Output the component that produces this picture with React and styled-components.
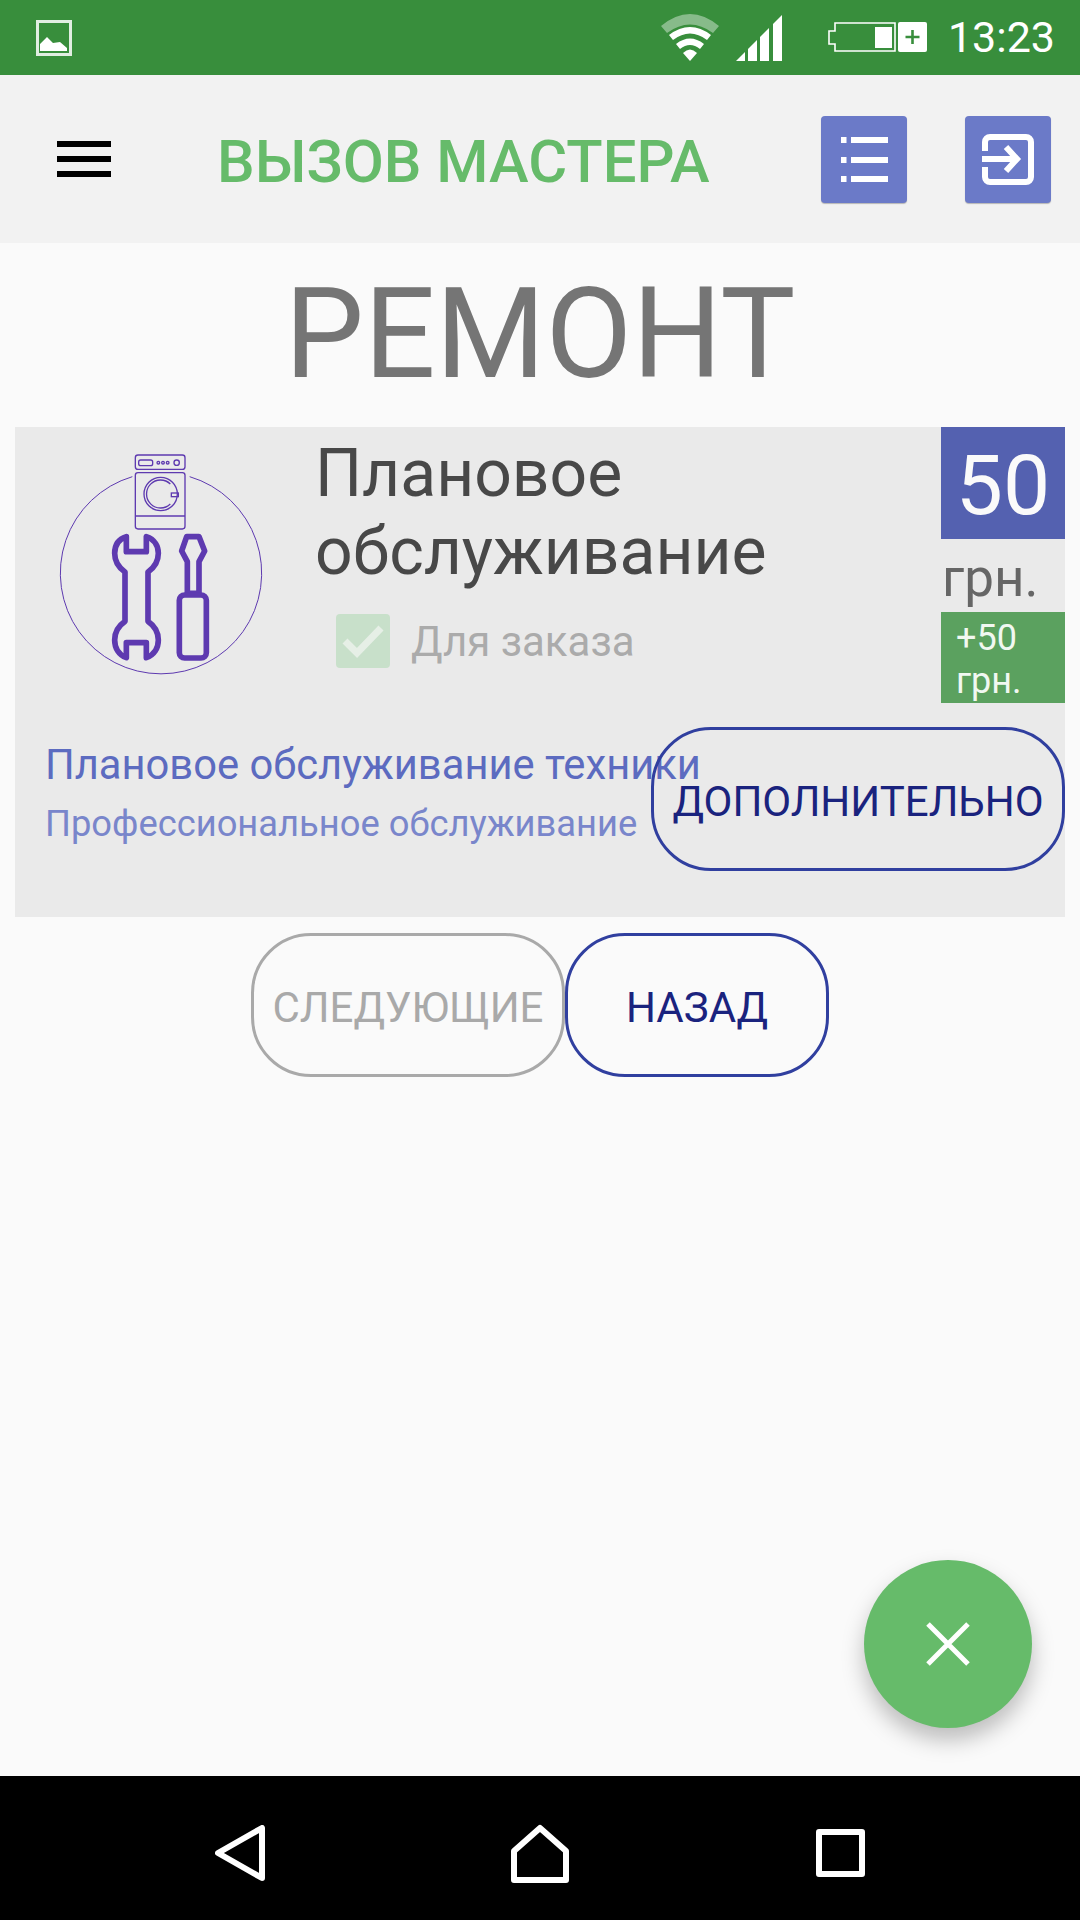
import React from 'react';
import styled, { createGlobalStyle } from 'styled-components';

const GlobalStyle = createGlobalStyle`
  html, body {
    margin: 0;
    padding: 0;
    background: #fafafa;
    font-family: Roboto, "Liberation Sans", sans-serif;
  }
`;

const Screen = styled.div`
  position: relative;
  display: flex;
  flex-direction: column;
  width: 1080px;
  height: 1920px;
  overflow: hidden;
  background: #fafafa;
`;

const StatusBar = styled.div`
  display: flex;
  align-items: center;
  height: 75px;
  padding: 0 25px 0 36px;
  background: #388e3c;
  color: #fff;
`;

const StatusIcons = styled.div`
  display: flex;
  align-items: center;
  margin-left: auto;
`;

const Clock = styled.span`
  margin-left: 21px;
  font-size: 43px;
  line-height: 75px;
`;

const Toolbar = styled.div`
  display: flex;
  align-items: center;
  height: 168px;
  padding: 0 29px 0 57px;
  background: #f2f2f2;
`;

const Burger = styled.div`
  display: flex;
  flex: none;
  flex-direction: column;
  gap: 9px;
  width: 54px;
  & > i {
    display: block;
    height: 6px;
    background: #000;
  }
`;

const AppTitle = styled.div`
  margin-left: 106px;
  padding-top: 5px;
  font-size: 59.7px;
  font-weight: 500;
  color: #66bb6a;
  white-space: nowrap;
`;

const ToolButton = styled.div`
  display: flex;
  flex: none;
  align-items: center;
  justify-content: center;
  width: 86px;
  height: 87px;
  margin-left: ${(props) => props.$gap};
  border-radius: 4px;
  background: #6b7ac8;
  box-shadow: 0 1px 1px rgba(0, 0, 0, 0.25);
`;

const PageTitle = styled.div`
  height: 184px;
  font-size: 126px;
  line-height: 182px;
  color: #757575;
  text-align: center;
`;

const Card = styled.div`
  display: flex;
  flex-direction: column;
  height: 490px;
  margin: 0 15px;
  background: #eaeaea;
`;

const TopRow = styled.div`
  display: flex;
  height: 285px;
`;

const Picture = styled.div`
  flex: none;
  width: 300px;
  padding: 23px 0 0 39px;
  box-sizing: border-box;
`;

const Info = styled.div`
  flex: 1;
  padding-top: 8px;
`;

const Name = styled.div`
  font-size: 66px;
  line-height: 78px;
  color: #484848;
`;

const OrderRow = styled.div`
  display: flex;
  align-items: center;
  gap: 21px;
  margin: 23px 0 0 21px;
`;

const CheckBox = styled.div`
  display: flex;
  align-items: center;
  justify-content: center;
  width: 54px;
  height: 54px;
  border-radius: 4px;
  background: #c8e0ca;
`;

const OrderLabel = styled.span`
  font-size: 42px;
  color: #ababab;
`;

const PriceColumn = styled.div`
  flex: none;
  width: 124px;
`;

const Price = styled.div`
  height: 112px;
  font-size: 84px;
  line-height: 118px;
  text-align: center;
  color: #fafafa;
  background: #5461b0;
`;

const Currency = styled.div`
  height: 73px;
  padding-left: 1px;
  font-size: 53px;
  line-height: 79px;
  color: #666;
`;

const Extra = styled.div`
  box-sizing: border-box;
  height: 91px;
  padding: 5px 0 0 15px;
  font-size: 36px;
  line-height: 43px;
  color: #f1f8f1;
  background: #5ba15f;
`;

const BottomRow = styled.div`
  display: flex;
  justify-content: space-between;
  margin-top: 15px;
  padding-left: 30px;
`;

const Details = styled.div`
  flex: 1;
  min-width: 0;
  white-space: nowrap;
`;

const DetailTitle = styled.div`
  margin-top: 14px;
  font-size: 41.7px;
  line-height: 48px;
  color: #5c6bc0;
`;

const DetailText = styled.div`
  margin-top: 11px;
  font-size: 36.35px;
  line-height: 48px;
  color: #7986cb;
`;

const OutlineButton = styled.div`
  display: flex;
  flex: none;
  align-items: center;
  justify-content: center;
  box-sizing: border-box;
  width: ${(props) => props.$width}px;
  height: 144px;
  padding-top: 4px;
  border: 3px solid ${(props) => (props.$disabled ? '#a9a9a9' : '#303f9f')};
  border-radius: 60px;
  font-size: 42px;
  color: ${(props) => (props.$disabled ? '#a9a9a9' : '#1a237e')};
  white-space: nowrap;
`;

const Pager = styled.div`
  display: flex;
  justify-content: center;
  margin-top: 16px;
`;

const Fab = styled.div`
  position: absolute;
  top: 1560px;
  left: 864px;
  display: flex;
  align-items: center;
  justify-content: center;
  width: 168px;
  height: 168px;
  border-radius: 50%;
  background: #66bb6a;
  box-shadow: 0 12px 22px rgba(0, 0, 0, 0.25);
`;

const NavBar = styled.div`
  display: grid;
  grid-template-columns: repeat(3, 300px);
  justify-content: center;
  justify-items: center;
  align-items: center;
  box-sizing: border-box;
  height: 144px;
  margin-top: auto;
  padding-top: 10px;
  background: #000;
`;

const PictureIcon = () => (
  <svg width="36" height="36" viewBox="0 0 36 36">
    <rect x="1.5" y="1.5" width="33" height="33" fill="none" stroke="#fff" strokeWidth="3" opacity="0.85" />
    <path d="M4 31V24L11 17 17 23 24 22 31 28V31Z" fill="#fff" />
  </svg>
);

const WifiIcon = () => (
  <svg width="58" height="47" viewBox="0 0 58 47" fill="#fff">
    <path d="M0 12Q29-12 58 12L52 19Q29 2 6 19Z" opacity="0.4" />
    <path d="M8 21Q29 5 50 21L46 26Q29 13 12 26Z" />
    <path d="M15 30Q29 19 43 30L39 35Q29 27 19 35Z" />
    <path d="M22 39Q29 32 36 39L29 47Z" />
  </svg>
);

const SignalIcon = () => (
  <svg width="46" height="46" viewBox="0 0 46 46" fill="#fff" style={{ marginLeft: 17 }}>
    <polygon points="0,46 9,37 9,46" />
    <polygon points="12,34 21,25 21,46 12,46" />
    <polygon points="24,22 33,13 33,46 24,46" />
    <polygon points="37,9 46,0 46,46 37,46" />
  </svg>
);

const BatteryIcon = () => (
  <svg width="99" height="31" viewBox="0 0 99 31" style={{ marginLeft: 46 }}>
    <path d="M7 1H67V29H7V22H1V9H7Z" fill="none" stroke="#fff" strokeWidth="1.6" />
    <rect x="47" y="5" width="17" height="21" fill="#fff" />
    <rect x="70" y="0" width="29" height="30" rx="2" fill="#fff" />
    <path d="M84.5 8V22M77.5 15H91.5" stroke="#388e3c" strokeWidth="2.6" />
  </svg>
);

const ListIcon = () => (
  <svg width="47" height="45" viewBox="0 0 47 45" fill="#fff">
    <rect x="0" y="0" width="5.5" height="6" />
    <rect x="10" y="0" width="37" height="6" />
    <rect x="0" y="20" width="5.5" height="6" />
    <rect x="10" y="20" width="37" height="6" />
    <rect x="0" y="39" width="5.5" height="6" />
    <rect x="10" y="39" width="37" height="6" />
  </svg>
);

const ExitIcon = () => (
  <svg width="52" height="51" viewBox="0 0 52 51" fill="none" stroke="#fff" strokeWidth="6">
    <path d="M3 17V8a5 5 0 0 1 5-5H44a5 5 0 0 1 5 5V43a5 5 0 0 1-5 5H8a5 5 0 0 1-5-5V33" />
    <path d="M0 25H35" />
    <path d="M24 13L35 25 24 37" />
  </svg>
);

const ServiceIcon = () => (
  <svg width="215" height="230" viewBox="165 90 645 690" fill="none" stroke="#5e3ab0">
    <path d="M400 170A302 302 0 1 0 572 170" strokeWidth="3" />
    <g strokeWidth="4">
      <rect x="409" y="105" width="149" height="43" rx="8" />
      <rect x="409" y="158" width="149" height="169" rx="8" />
      <path d="M409 288H558" />
      <circle cx="485" cy="222" r="50" />
      <path d="M514 192A42 42 0 1 0 514 252" />
      <rect x="517" y="219" width="21" height="11" />
      <rect x="419" y="120" width="42" height="17" rx="6" />
      <circle cx="478" cy="128" r="4" />
      <circle cx="492" cy="128" r="4" />
      <circle cx="506" cy="128" r="4" />
      <circle cx="533" cy="128" r="8" />
    </g>
    <g strokeWidth="17" strokeLinejoin="round">
      <path d="M382 350C355 358 347 380 347 400C347 425 362 445 378 456V604C362 615 347 635 347 660C347 685 360 705 382 713V668H442V713C465 705 478 685 478 660C478 635 463 615 447 604V456C463 445 478 425 478 400C478 380 468 358 442 350V395H382Z" />
      <path d="M563 350H600L617 393 600 425V520H565V425L548 393Z" />
      <rect x="541" y="525" width="81" height="189" rx="16" />
    </g>
  </svg>
);

const CheckIcon = () => (
  <svg width="42" height="34" viewBox="0 0 42 34" fill="none" stroke="#e6efe6" strokeWidth="7">
    <path d="M3 17L15 29 39 4" />
  </svg>
);

const CloseIcon = () => (
  <svg width="44" height="44" viewBox="0 0 44 44" stroke="#fff" strokeWidth="5">
    <path d="M2 2L42 42M42 2L2 42" />
  </svg>
);

const BackIcon = () => (
  <svg width="50" height="56" viewBox="0 0 50 56" fill="none" stroke="#fff" strokeWidth="6" strokeLinejoin="round">
    <path d="M47 3V53L3 28Z" />
  </svg>
);

const HomeIcon = () => (
  <svg width="58" height="59" viewBox="0 0 58 59" fill="none" stroke="#fff" strokeWidth="6" strokeLinejoin="round">
    <path d="M29 4L55 27V56H3V27Z" />
  </svg>
);

const RecentIcon = () => (
  <svg width="49" height="48" viewBox="0 0 49 48" fill="none" stroke="#fff" strokeWidth="6" strokeLinejoin="round">
    <rect x="3" y="3" width="43" height="42" />
  </svg>
);

const App = () => (
  <Screen>
    <GlobalStyle />
    <StatusBar>
      <PictureIcon />
      <StatusIcons>
        <WifiIcon />
        <SignalIcon />
        <BatteryIcon />
        <Clock>13:23</Clock>
      </StatusIcons>
    </StatusBar>
    <Toolbar>
      <Burger>
        <i />
        <i />
        <i />
      </Burger>
      <AppTitle>ВЫЗОВ МАСТЕРА</AppTitle>
      <ToolButton $gap="auto">
        <ListIcon />
      </ToolButton>
      <ToolButton $gap="58px">
        <ExitIcon />
      </ToolButton>
    </Toolbar>
    <PageTitle>РЕМОНТ</PageTitle>
    <Card>
      <TopRow>
        <Picture>
          <ServiceIcon />
        </Picture>
        <Info>
          <Name>
            Плановое
            <br />
            обслуживание
          </Name>
          <OrderRow>
            <CheckBox>
              <CheckIcon />
            </CheckBox>
            <OrderLabel>Для заказа</OrderLabel>
          </OrderRow>
        </Info>
        <PriceColumn>
          <Price>50</Price>
          <Currency>грн.</Currency>
          <Extra>
            +50
            <br />
            грн.
          </Extra>
        </PriceColumn>
      </TopRow>
      <BottomRow>
        <Details>
          <DetailTitle>Плановое обслуживание техники</DetailTitle>
          <DetailText>Профессиональное обслуживание</DetailText>
        </Details>
        <OutlineButton $width={414}>ДОПОЛНИТЕЛЬНО</OutlineButton>
      </BottomRow>
    </Card>
    <Pager>
      <OutlineButton $width={314} $disabled>
        СЛЕДУЮЩИЕ
      </OutlineButton>
      <OutlineButton $width={264}>НАЗАД</OutlineButton>
    </Pager>
    <Fab>
      <CloseIcon />
    </Fab>
    <NavBar>
      <BackIcon />
      <HomeIcon />
      <RecentIcon />
    </NavBar>
  </Screen>
);

export default App;
